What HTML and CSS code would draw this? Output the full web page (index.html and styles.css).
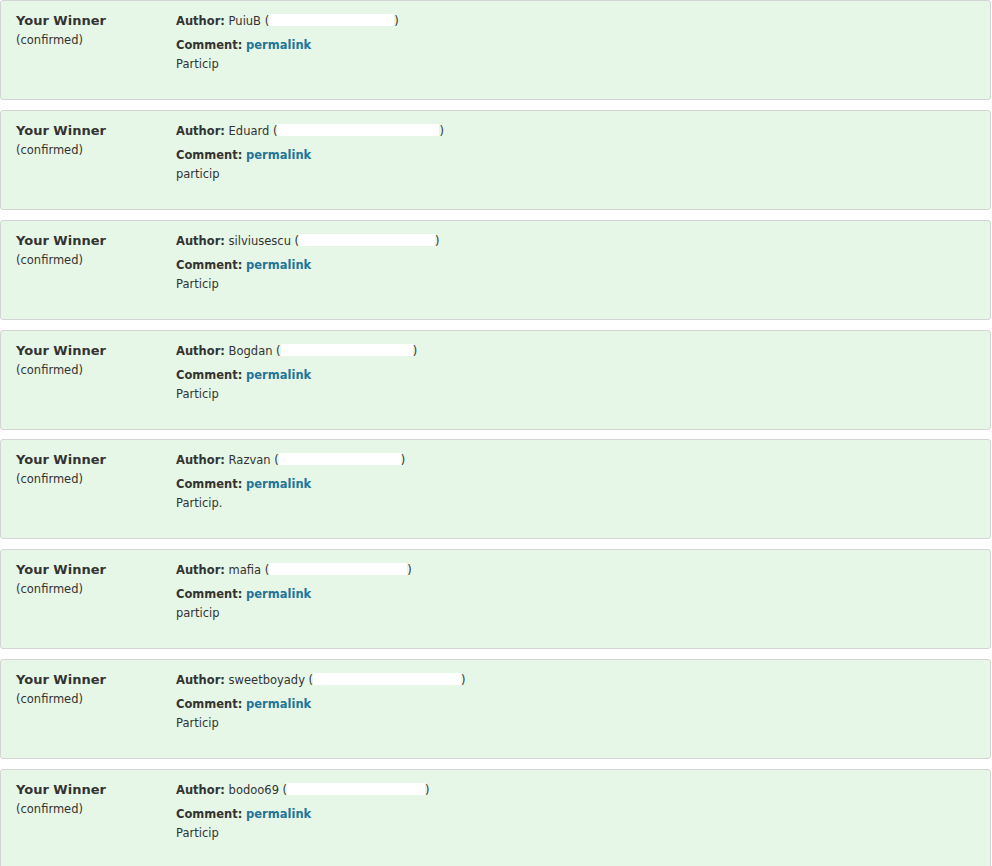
FILE: index.html
```html
<!DOCTYPE html>
<html lang="en">
<head>
    <meta charset="UTF-8">
    <meta name="viewport" content="width=device-width, initial-scale=1.0">
    <title>Winners</title>
    <link rel="stylesheet" href="styles.css">
</head>
<body>

    <div class="winner">
        <div class="status">
            <strong>Your Winner</strong>
            <span>(confirmed)</span>
        </div>
        <div class="entry">
            <p class="author"><b>Author:</b> PuiuB (<span class="hidden" style="width:125px"></span>)</p>
            <p><b>Comment:</b> <a href="#">permalink</a></p>
            <p>Particip</p>
        </div>
    </div>

    <div class="winner">
        <div class="status">
            <strong>Your Winner</strong>
            <span>(confirmed)</span>
        </div>
        <div class="entry">
            <p class="author"><b>Author:</b> Eduard (<span class="hidden" style="width:162px"></span>)</p>
            <p><b>Comment:</b> <a href="#">permalink</a></p>
            <p>particip</p>
        </div>
    </div>

    <div class="winner">
        <div class="status">
            <strong>Your Winner</strong>
            <span>(confirmed)</span>
        </div>
        <div class="entry">
            <p class="author"><b>Author:</b> silviusescu (<span class="hidden" style="width:136px"></span>)</p>
            <p><b>Comment:</b> <a href="#">permalink</a></p>
            <p>Particip</p>
        </div>
    </div>

    <div class="winner">
        <div class="status">
            <strong>Your Winner</strong>
            <span>(confirmed)</span>
        </div>
        <div class="entry">
            <p class="author"><b>Author:</b> Bogdan (<span class="hidden" style="width:132px"></span>)</p>
            <p><b>Comment:</b> <a href="#">permalink</a></p>
            <p>Particip</p>
        </div>
    </div>

    <div class="winner">
        <div class="status">
            <strong>Your Winner</strong>
            <span>(confirmed)</span>
        </div>
        <div class="entry">
            <p class="author"><b>Author:</b> Razvan (<span class="hidden" style="width:122px"></span>)</p>
            <p><b>Comment:</b> <a href="#">permalink</a></p>
            <p>Particip.</p>
        </div>
    </div>

    <div class="winner">
        <div class="status">
            <strong>Your Winner</strong>
            <span>(confirmed)</span>
        </div>
        <div class="entry">
            <p class="author"><b>Author:</b> mafia (<span class="hidden" style="width:138px"></span>)</p>
            <p><b>Comment:</b> <a href="#">permalink</a></p>
            <p>particip</p>
        </div>
    </div>

    <div class="winner">
        <div class="status">
            <strong>Your Winner</strong>
            <span>(confirmed)</span>
        </div>
        <div class="entry">
            <p class="author"><b>Author:</b> sweetboyady (<span class="hidden" style="width:148px"></span>)</p>
            <p><b>Comment:</b> <a href="#">permalink</a></p>
            <p>Particip</p>
        </div>
    </div>

    <div class="winner">
        <div class="status">
            <strong>Your Winner</strong>
            <span>(confirmed)</span>
        </div>
        <div class="entry">
            <p class="author"><b>Author:</b> bodoo69 (<span class="hidden" style="width:138px"></span>)</p>
            <p><b>Comment:</b> <a href="#">permalink</a></p>
            <p>Particip</p>
        </div>
    </div>

</body>
</html>
```

FILE: styles.css
```css
body {
    font-family: "DejaVu Sans", Verdana, sans-serif;
    font-size: 11.5px;
    color: #333;
    margin: 0;
    padding: 0;
    background-color: #fff;
}

.winner {
    display: grid;
    grid-template-columns: 160px 1fr;
    box-sizing: border-box;
    width: 991px;
    height: 100px;
    margin-bottom: 9.86px;
    padding: 10px 15px;
    background-color: #e7f7e7;
    border: 1px solid #d4d4d4;
    border-radius: 3px;
}

.status strong {
    display: block;
    font-size: 13px;
    line-height: 19px;
}

.status span {
    display: block;
    margin-top: 1px;
    line-height: 19px;
}

.entry {
    padding-top: 1px;
}

.entry p {
    margin: 0;
    line-height: 19px;
}

.entry .author {
    margin-bottom: 5px;
}

.entry a {
    color: #21759b;
    font-weight: bold;
    text-decoration: none;
}

.hidden {
    display: inline-block;
    height: 12px;
    vertical-align: -1px;
    background-color: #fff;
}
```
